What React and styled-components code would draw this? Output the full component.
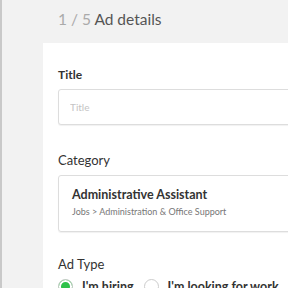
import React, { useState } from 'react'
import styled, { createGlobalStyle } from 'styled-components'

const GlobalStyle = createGlobalStyle`
  html, body {
    margin: 0;
    padding: 0;
    background: #f2f2f2;
    overflow: hidden;
    font-family: Lato, "Open Sans", Arial, sans-serif;
  }
`

const App = () => {
  const [adType, setAdType] = useState('hiring')

  return (
    <Page>
      <GlobalStyle />
      <Heading>
        <Step>1 / 5</Step> Ad details
      </Heading>
      <Card>
        <Field>
          <Label bold>Title</Label>
          <Input placeholder="Title" />
        </Field>
        <Field space={28}>
          <Label>Category</Label>
          <CategoryBox>
            <CategoryName>Administrative Assistant</CategoryName>
            <CategoryPath>Jobs &gt; Administration &amp; Office Support</CategoryPath>
          </CategoryBox>
        </Field>
        <Field space={25}>
          <Label>Ad Type</Label>
          <RadioRow>
            <RadioOption onClick={() => setAdType('hiring')}>
              <RadioDot checked={adType === 'hiring'} />
              I'm hiring
            </RadioOption>
            <RadioOption onClick={() => setAdType('looking')}>
              <RadioDot checked={adType === 'looking'} />
              I'm looking for work
            </RadioOption>
          </RadioRow>
        </Field>
      </Card>
    </Page>
  )
}

export default App

const Page = styled.div`
  width: 600px;
  height: 288px;
  border-left: 2px solid #c9c9c9;
  padding-left: 41px;
  box-sizing: border-box;
`

const Heading = styled.h1`
  margin: 0;
  padding: 10px 0 0 15px;
  height: 33px;
  box-sizing: border-box;
  font-size: 15.5px;
  font-weight: 400;
  color: #555;
`

const Step = styled.span`
  color: #aaa;
`

const Card = styled.div`
  background: #fff;
  padding: 24px 0 0 15px;
  margin-top: 10px;
  display: flex;
  flex-direction: column;
`

const Field = styled.div`
  display: flex;
  flex-direction: column;
  margin-top: ${({ space }) => (space ? `${space}px` : '0')};
`

const Label = styled.label`
  font-size: ${({ bold }) => (bold ? '12px' : '13px')};
  font-weight: ${({ bold }) => (bold ? 700 : 400)};
  color: #333;
  margin-bottom: 7px;
  line-height: 15px;
`

const Input = styled.input`
  height: 36px;
  box-sizing: border-box;
  border: 1px solid #ddd;
  border-radius: 3px;
  padding: 0 11px;
  font-family: inherit;
  font-size: 10px;
  outline: none;
  box-shadow: 0 1px 1px rgba(0, 0, 0, 0.06);
  &::placeholder {
    color: #c4c4c4;
  }
`

const CategoryBox = styled.div`
  height: 57px;
  box-sizing: border-box;
  border: 1px solid #ddd;
  border-radius: 3px;
  padding: 11px 13px;
  box-shadow: 0 1px 1px rgba(0, 0, 0, 0.06);
`

const CategoryName = styled.div`
  font-size: 12.5px;
  font-weight: 700;
  color: #333;
  line-height: 16px;
`

const CategoryPath = styled.div`
  font-size: 9px;
  color: #777;
  margin-top: 3px;
`

const RadioRow = styled.div`
  display: flex;
  gap: 10px;
`

const RadioOption = styled.div`
  display: flex;
  align-items: center;
  gap: 9px;
  font-size: 12.5px;
  font-weight: 700;
  color: #333;
  cursor: pointer;
`

const RadioDot = styled.span`
  width: 15px;
  height: 15px;
  border-radius: 50%;
  box-sizing: border-box;
  border: 1px solid #ccc;
  background: ${({ checked }) => (checked ? '#2ec24a' : '#fff')};
  box-shadow: ${({ checked }) => (checked ? 'inset 0 0 0 2px #fff' : 'none')};
`
